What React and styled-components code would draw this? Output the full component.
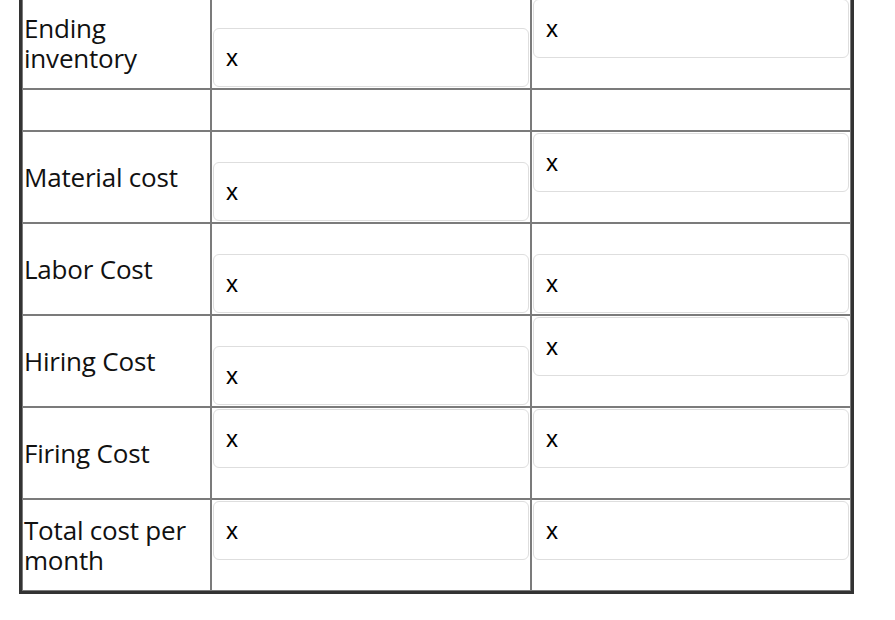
import React from "react";
import styled, { createGlobalStyle } from "styled-components";

const GlobalStyle = createGlobalStyle`
  html, body {
    margin: 0;
    padding: 0;
    background: #ffffff;
    overflow: hidden;
  }
`;

const Page = styled.div`
  padding-left: 19px;
  height: 620px;
  overflow: hidden;
`;

const Table = styled.table`
  margin-top: -6px;
  width: 835px;
  border: 3px solid #333333;
  border-collapse: separate;
  border-spacing: 0;
  table-layout: fixed;
`;

const Cell = styled.td`
  border: 1px solid #7b7b7b;
  padding: 1px;
  vertical-align: middle;
  width: ${(props) => props.$width}px;
`;

const Label = styled.div`
  font-family: "Open Sans", sans-serif;
  font-size: 26px;
  line-height: 30px;
  letter-spacing: -0.2px;
  color: #111111;
`;

const Slot = styled.div`
  display: flex;
  flex-direction: column;
  height: ${(props) => (props.$empty ? 38 : 88)}px;
  justify-content: ${(props) =>
    props.$align === "bottom" ? "flex-end" : "flex-start"};
`;

const Field = styled.input`
  box-sizing: border-box;
  width: 100%;
  height: 59px;
  margin: 0;
  padding: 0 0 0 12px;
  border: 1px solid #dedede;
  border-radius: 6px;
  background: #ffffff;
  font-family: "Liberation Sans", Arial, sans-serif;
  font-size: 24px;
  color: #000000;
  outline: none;
`;

const rows = [
  { label: "Ending inventory", a: "bottom", b: "top" },
  { empty: true },
  { label: "Material cost", a: "bottom", b: "top" },
  { label: "Labor Cost", a: "bottom", b: "bottom" },
  { label: "Hiring Cost", a: "bottom", b: "top" },
  { label: "Firing Cost", a: "top", b: "top" },
  { label: "Total cost per month", a: "top", b: "top" },
];

function ValueCell({ align }) {
  return (
    <Cell $width={318}>
      <Slot $align={align}>
        <Field readOnly defaultValue="x" />
      </Slot>
    </Cell>
  );
}

export default function App() {
  return (
    <Page>
      <GlobalStyle />
      <Table>
        <colgroup>
          <col style={{ width: 189 }} />
          <col style={{ width: 320 }} />
          <col style={{ width: 320 }} />
        </colgroup>
        <tbody>
          {rows.map((row, i) =>
            row.empty ? (
              <tr key={i}>
                <Cell $width={187}>
                  <Slot $empty />
                </Cell>
                <Cell $width={318}>
                  <Slot $empty />
                </Cell>
                <Cell $width={318}>
                  <Slot $empty />
                </Cell>
              </tr>
            ) : (
              <tr key={i}>
                <Cell $width={187}>
                  <Label>{row.label}</Label>
                </Cell>
                <ValueCell align={row.a} />
                <ValueCell align={row.b} />
              </tr>
            )
          )}
        </tbody>
      </Table>
    </Page>
  );
}
